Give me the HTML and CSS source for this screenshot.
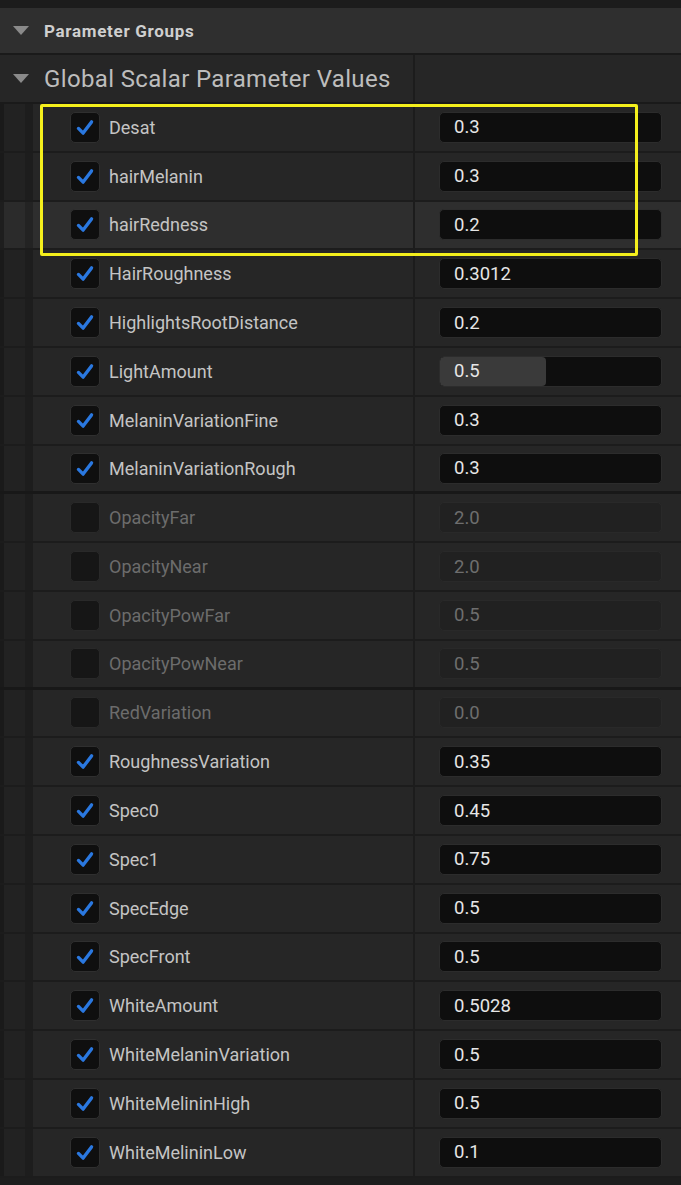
FILE: index.html
```html
<!DOCTYPE html>
<html>
<head>
<meta charset="utf-8">
<link rel="stylesheet" href="styles.css">
</head>
<body>
<div class="panel">
  <div class="topstrip"></div>
  <div class="group-head">
    <span class="tri"></span><span class="group-title">Parameter Groups</span>
  </div>
  <div class="sub-head">
    <div class="sub-left"><span class="tri"></span><span class="sub-title">Global Scalar Parameter Values</span></div>
    <div class="sub-right"></div>
  </div>
  <div class="rows">
    <div class="row"><div class="gut"></div><div class="name"><span class="cb on"><svg viewBox="0 0 30 30"><path d="M8 16 L13 21 L22 9"/></svg></span><span class="lbl">Desat</span></div><div class="val"><div class="box"><span>0.3</span></div></div></div>
    <div class="row"><div class="gut"></div><div class="name"><span class="cb on"><svg viewBox="0 0 30 30"><path d="M8 16 L13 21 L22 9"/></svg></span><span class="lbl">hairMelanin</span></div><div class="val"><div class="box"><span>0.3</span></div></div></div>
    <div class="row hl"><div class="gut"></div><div class="name"><span class="cb on"><svg viewBox="0 0 30 30"><path d="M8 16 L13 21 L22 9"/></svg></span><span class="lbl">hairRedness</span></div><div class="val"><div class="box"><span>0.2</span></div></div></div>
    <div class="row"><div class="gut"></div><div class="name"><span class="cb on"><svg viewBox="0 0 30 30"><path d="M8 16 L13 21 L22 9"/></svg></span><span class="lbl">HairRoughness</span></div><div class="val"><div class="box"><span>0.3012</span></div></div></div>
    <div class="row"><div class="gut"></div><div class="name"><span class="cb on"><svg viewBox="0 0 30 30"><path d="M8 16 L13 21 L22 9"/></svg></span><span class="lbl">HighlightsRootDistance</span></div><div class="val"><div class="box"><span>0.2</span></div></div></div>
    <div class="row"><div class="gut"></div><div class="name"><span class="cb on"><svg viewBox="0 0 30 30"><path d="M8 16 L13 21 L22 9"/></svg></span><span class="lbl">LightAmount</span></div><div class="val"><div class="box slider"><div class="fill" style="width:48%"></div><span>0.5</span></div></div></div>
    <div class="row"><div class="gut"></div><div class="name"><span class="cb on"><svg viewBox="0 0 30 30"><path d="M8 16 L13 21 L22 9"/></svg></span><span class="lbl">MelaninVariationFine</span></div><div class="val"><div class="box"><span>0.3</span></div></div></div>
    <div class="row sep"><div class="gut"></div><div class="name"><span class="cb on"><svg viewBox="0 0 30 30"><path d="M8 16 L13 21 L22 9"/></svg></span><span class="lbl">MelaninVariationRough</span></div><div class="val"><div class="box"><span>0.3</span></div></div></div>
    <div class="row off"><div class="gut"></div><div class="name"><span class="cb"></span><span class="lbl">OpacityFar</span></div><div class="val"><div class="box"><span>2.0</span></div></div></div>
    <div class="row off"><div class="gut"></div><div class="name"><span class="cb"></span><span class="lbl">OpacityNear</span></div><div class="val"><div class="box"><span>2.0</span></div></div></div>
    <div class="row off"><div class="gut"></div><div class="name"><span class="cb"></span><span class="lbl">OpacityPowFar</span></div><div class="val"><div class="box"><span>0.5</span></div></div></div>
    <div class="row off sep"><div class="gut"></div><div class="name"><span class="cb"></span><span class="lbl">OpacityPowNear</span></div><div class="val"><div class="box"><span>0.5</span></div></div></div>
    <div class="row off"><div class="gut"></div><div class="name"><span class="cb"></span><span class="lbl">RedVariation</span></div><div class="val"><div class="box"><span>0.0</span></div></div></div>
    <div class="row"><div class="gut"></div><div class="name"><span class="cb on"><svg viewBox="0 0 30 30"><path d="M8 16 L13 21 L22 9"/></svg></span><span class="lbl">RoughnessVariation</span></div><div class="val"><div class="box"><span>0.35</span></div></div></div>
    <div class="row"><div class="gut"></div><div class="name"><span class="cb on"><svg viewBox="0 0 30 30"><path d="M8 16 L13 21 L22 9"/></svg></span><span class="lbl">Spec0</span></div><div class="val"><div class="box"><span>0.45</span></div></div></div>
    <div class="row"><div class="gut"></div><div class="name"><span class="cb on"><svg viewBox="0 0 30 30"><path d="M8 16 L13 21 L22 9"/></svg></span><span class="lbl">Spec1</span></div><div class="val"><div class="box"><span>0.75</span></div></div></div>
    <div class="row"><div class="gut"></div><div class="name"><span class="cb on"><svg viewBox="0 0 30 30"><path d="M8 16 L13 21 L22 9"/></svg></span><span class="lbl">SpecEdge</span></div><div class="val"><div class="box"><span>0.5</span></div></div></div>
    <div class="row"><div class="gut"></div><div class="name"><span class="cb on"><svg viewBox="0 0 30 30"><path d="M8 16 L13 21 L22 9"/></svg></span><span class="lbl">SpecFront</span></div><div class="val"><div class="box"><span>0.5</span></div></div></div>
    <div class="row"><div class="gut"></div><div class="name"><span class="cb on"><svg viewBox="0 0 30 30"><path d="M8 16 L13 21 L22 9"/></svg></span><span class="lbl">WhiteAmount</span></div><div class="val"><div class="box"><span>0.5028</span></div></div></div>
    <div class="row"><div class="gut"></div><div class="name"><span class="cb on"><svg viewBox="0 0 30 30"><path d="M8 16 L13 21 L22 9"/></svg></span><span class="lbl">WhiteMelaninVariation</span></div><div class="val"><div class="box"><span>0.5</span></div></div></div>
    <div class="row"><div class="gut"></div><div class="name"><span class="cb on"><svg viewBox="0 0 30 30"><path d="M8 16 L13 21 L22 9"/></svg></span><span class="lbl">WhiteMelininHigh</span></div><div class="val"><div class="box"><span>0.5</span></div></div></div>
    <div class="row"><div class="gut"></div><div class="name"><span class="cb on"><svg viewBox="0 0 30 30"><path d="M8 16 L13 21 L22 9"/></svg></span><span class="lbl">WhiteMelininLow</span></div><div class="val"><div class="box"><span>0.1</span></div></div></div>
  </div>
  <div class="highlight"></div>
</div>
</body>
</html>
```

FILE: styles.css
```css
* { box-sizing: border-box; }
html, body { margin: 0; padding: 0; }
body {
  width: 681px;
  height: 1185px;
  background: #1d1d1d;
  font-family: Roboto, "Noto Sans", sans-serif;
  overflow: hidden;
}
.panel { position: relative; width: 681px; }
.topstrip { height: 8px; background: #1c1c1c; }
.group-head {
  height: 47px;
  background: #2f2f2f;
  border-bottom: 2px solid #1a1a1a;
  display: flex;
  align-items: center;
  padding-left: 13px;
}
.tri {
  width: 0; height: 0;
  border-left: 8px solid transparent;
  border-right: 8px solid transparent;
  border-top: 9px solid #8a8a8a;
  margin-right: 15px;
}
.group-title { color: #cfcfcf; font-weight: 700; font-size: 17px; letter-spacing: 0.7px; }
.sub-head {
  height: 49px;
  background: #262626;
  display: flex;
  border-bottom: 2px solid #1a1a1a;
}
.sub-left {
  width: 415px;
  display: flex;
  align-items: center;
  padding-left: 13px;
  border-right: 2px solid #1c1c1c;
}
.sub-title { color: #bdbdbd; font-size: 24px; letter-spacing: 0.35px; }
.sub-right { flex: 1; }
.rows { display: flex; flex-direction: column; }
.row {
  display: grid;
  grid-template-columns: 33px 382px 1fr;
  height: 48.8px;
  border-bottom: 2px solid #1c1c1c;
  background: #262626;
}
.row.sep { border-bottom: 3px solid #181818; }
.row.hl { background: #2e2e2e; }
.gut {
  background: linear-gradient(to right, #1a1a1a 0, #1a1a1a 4px, #222 4px, #222 25px, #1d1d1d 25px);
}
.row.hl .gut { background: linear-gradient(to right, #1e1e1e 0, #1e1e1e 4px, #2b2b2b 4px, #2b2b2b 25px, #232323 25px); }
.name {
  display: flex;
  align-items: center;
  padding-left: 37px;
  border-right: 2px solid #1c1c1c;
}
.cb {
  width: 30px; height: 31px;
  background: #0f0f0f;
  border: 1px solid #2f2f2f;
  border-radius: 5px;
  margin-right: 9px;
  display: flex;
  flex: none;
}
.cb svg { width: 28px; height: 29px; }
.cb path { fill: none; stroke: #2a78e0; stroke-width: 3.6; stroke-linecap: round; stroke-linejoin: round; }
.lbl { color: #c4c4c4; font-size: 18px; white-space: nowrap; }
.off .cb { background: #161616; border-color: #292929; }
.off .lbl { color: #6c6c6c; }
.val {
  display: flex;
  align-items: center;
  padding-left: 24px;
  padding-right: 18px;
}
.box {
  position: relative;
  width: 223px;
  height: 31px;
  background: #0e0e0e;
  border: 1px solid #2c2c2c;
  border-radius: 5px;
  display: flex;
  align-items: center;
  padding-left: 14px;
  overflow: hidden;
}
.box span { position: relative; color: #e6e6e6; font-size: 18.5px; }
.off .box { background: #212121; border-color: #292929; }
.off .box span { color: #6e6e6e; }
.fill {
  position: absolute;
  left: 0; top: 0; bottom: 0;
  background: #3a3a3a;
  border-radius: 4px;
}
.highlight {
  position: absolute;
  left: 40px; top: 104px;
  width: 598px; height: 152px;
  border: 3px solid #f4ef1c;
  border-radius: 2px;
  pointer-events: none;
}
```
